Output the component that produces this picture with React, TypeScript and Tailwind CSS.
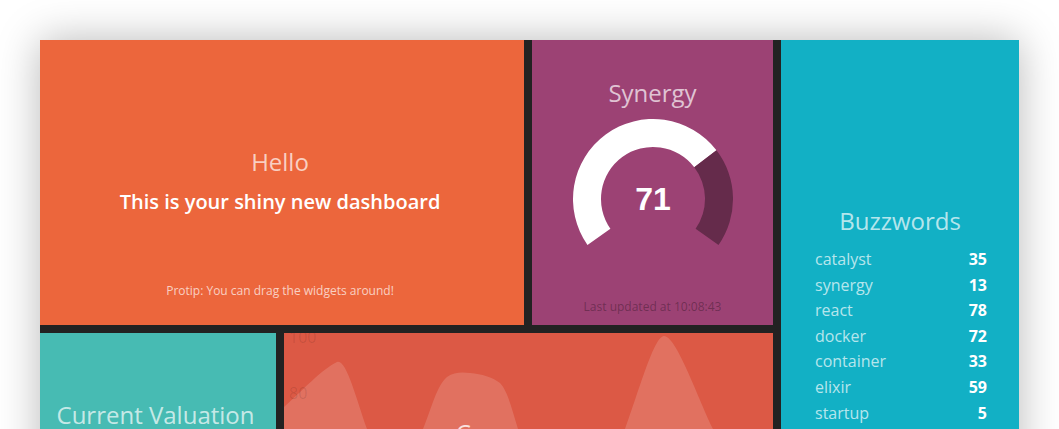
import React from 'react';

const buzzwords: [string, number][] = [
  ['catalyst', 35],
  ['synergy', 13],
  ['react', 78],
  ['docker', 72],
  ['container', 33],
  ['elixir', 59],
  ['startup', 5],
  ['serverless', 21],
];

// gauge geometry: 250° sweep, gap at the bottom
const pt = (r: number, deg: number) => {
  const a = (deg * Math.PI) / 180;
  return [80 + r * Math.sin(a), 80 - r * Math.cos(a)];
};

const arc = (a0: number, a1: number) => {
  const [x0, y0] = pt(80, a0);
  const [x1, y1] = pt(80, a1);
  const [i0, j0] = pt(52, a0);
  const [i1, j1] = pt(52, a1);
  const large = a1 - a0 > 180 ? 1 : 0;
  return `M${x0} ${y0} A80 80 0 ${large} 1 ${x1} ${y1} L${i1} ${j1} A52 52 0 ${large} 0 ${i0} ${j0} Z`;
};

function Meter({ value }: { value: number }) {
  const split = -125 + (value / 100) * 250;
  return (
    <svg width="160" height="160" viewBox="0 0 160 160" className="mt-[8px]">
      <path d={arc(-125, split)} fill="#ffffff" />
      <path d={arc(split, 125)} fill="#652b4b" />
      <text
        x="80"
        y="91"
        textAnchor="middle"
        fill="#ffffff"
        fontSize="32"
        fontWeight="700"
        fontFamily="'Liberation Sans', Arial, sans-serif"
      >
        {value}
      </text>
    </svg>
  );
}

function Graph() {
  return (
    <svg width="489" height="285" viewBox="0 0 489 285" className="absolute inset-0">
      <path
        d="M0,74 C18,58 38,36 53,29 C62,25 72,65 83,96 C92,122 100,150 111,150 C122,150 130,116 139,96 C148,74 153,52 163,44 C170,39 178,39 186,40 C198,41 208,44 216,50 C224,58 229,80 234,96 C248,140 265,180 287,180 C310,180 328,130 341,96 C355,58 370,3 380,3 C392,3 412,60 429,96 C446,132 460,190 489,200 L489,285 L0,285 Z"
        fill="rgba(255,255,255,0.15)"
      />
      <text x="5" y="10" fontSize="16" fill="rgba(0,0,0,0.1)" fontFamily="'Open Sans', sans-serif">
        100
      </text>
      <text x="5" y="66" fontSize="16" fill="rgba(0,0,0,0.1)" fontFamily="'Open Sans', sans-serif">
        80
      </text>
    </svg>
  );
}

export default function App() {
  return (
    <div className="min-h-screen bg-white p-10 font-['Open_Sans',sans-serif]">
      <div className="grid w-[979px] grid-cols-[236px_240px_241px_238px] grid-rows-[285px_285px] gap-2 bg-[#222222] shadow-[0_0_40px_rgba(0,0,0,0.28)]">
        {/* welcome */}
        <div className="col-span-2 flex flex-col items-center bg-[#ec663c] pt-[104px] pr-[4px] pb-[25px]">
          <h1 className="text-[24px] leading-[36px] font-normal text-white/70">Hello</h1>
          <p className="mt-[7px] text-[20px] leading-[30px] font-semibold text-white">
            This is your shiny new dashboard
          </p>
          <p className="mt-auto text-[12px] leading-[18px] text-white/70">
            Protip: You can drag the widgets around!
          </p>
        </div>

        {/* meter */}
        <div className="flex flex-col items-center bg-[#9c4274] pt-[35px]">
          <h1 className="text-[24px] leading-[36px] font-normal text-white/70">Synergy</h1>
          <Meter value={71} />
          <p className="mt-[19px] text-[12px] leading-[18px] text-black/30">Last updated at 10:08:43</p>
        </div>

        {/* list */}
        <div className="row-span-2 flex flex-col overflow-hidden bg-[#12b0c5] px-[32px] pt-[163px]">
          <h1 className="text-center text-[24px] leading-[36px] font-normal text-white/70">Buzzwords</h1>
          <ul className="mt-[8px] pl-[2px]">
            {buzzwords.map(([label, value]) => (
              <li key={label} className="flex justify-between text-[16px] leading-[25.6px]">
                <span className="text-white/70">{label}</span>
                <span className="font-bold text-white">{value}</span>
              </li>
            ))}
          </ul>
        </div>

        {/* number */}
        <div className="flex flex-col items-center bg-[#47bbb3] pt-[64px] pr-[5px]">
          <h1 className="text-[24px] leading-[36px] font-normal text-white/70">Current Valuation</h1>
        </div>

        {/* graph */}
        <div className="relative col-span-2 overflow-hidden bg-[#dc5945]">
          <Graph />
          <h1 className="absolute inset-x-0 top-[82px] text-center text-[24px] leading-[36px] font-normal text-white/80">
            Convergence
          </h1>
        </div>
      </div>
    </div>
  );
}
